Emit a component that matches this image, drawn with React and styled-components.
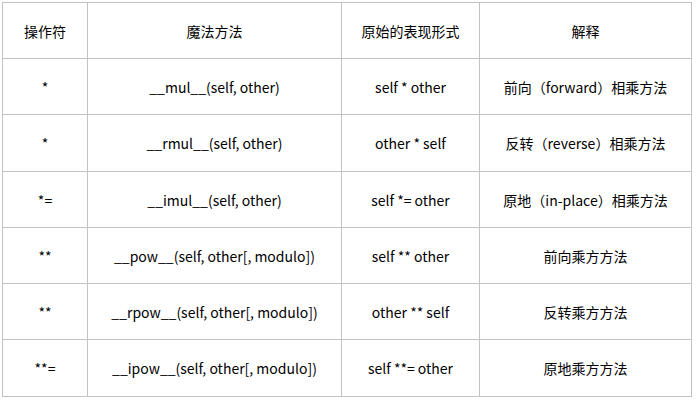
import styled, { createGlobalStyle } from 'styled-components';

const GlobalStyle = createGlobalStyle`
  body {
    margin: 0;
    background: #fff;
  }
`;

const Wrap = styled.div`
  padding: 2px;
`;

const Table = styled.table`
  border-collapse: collapse;
  table-layout: fixed;
  width: 690px;
  font-family: "Noto Sans CJK SC", "Noto Sans", sans-serif;
  font-size: 14px;
  color: #000;
`;

const Row = styled.tr`
  height: ${ ( { h } ) => h }px;
`;

const Cell = styled.td`
  border: 1px solid #c2c2c2;
  text-align: center;
  vertical-align: middle;
  padding: 0;
  white-space: nowrap;
`;

const HeadCell = styled( Cell ).attrs( { as: 'th' } )`
  font-weight: normal;
`;

const widths = [ 85, 254, 138, 212 ];
const heights = [ 56, 57, 56, 56, 56, 57 ];

const rows = [
  [ '*', '__mul__(self, other)', 'self * other', '前向（forward）相乘方法' ],
  [ '*', '__rmul__(self, other)', 'other * self', '反转（reverse）相乘方法' ],
  [ '*=', '__imul__(self, other)', 'self *= other', '原地（in-place）相乘方法' ],
  [ '**', '__pow__(self, other[, modulo])', 'self ** other', '前向乘方方法' ],
  [ '**', '__rpow__(self, other[, modulo])', 'other ** self', '反转乘方方法' ],
  [ '**=', '__ipow__(self, other[, modulo])', 'self **= other', '原地乘方方法' ],
];

export default function App() {
  return (
    <>
      <GlobalStyle />
      <Wrap>
        <Table>
          <colgroup>
            { widths.map( ( w, i ) => <col key={ i } style={ { width: w } } /> ) }
          </colgroup>
          <thead>
            <Row h={ 56 }>
              <HeadCell>操作符</HeadCell>
              <HeadCell>魔法方法</HeadCell>
              <HeadCell>原始的表现形式</HeadCell>
              <HeadCell>解释</HeadCell>
            </Row>
          </thead>
          <tbody>
            { rows.map( ( r, i ) => (
              <Row key={ i } h={ heights[ i ] }>
                { r.map( ( c, j ) => <Cell key={ j }>{ c }</Cell> ) }
              </Row>
            ) ) }
          </tbody>
        </Table>
      </Wrap>
    </>
  );
}
